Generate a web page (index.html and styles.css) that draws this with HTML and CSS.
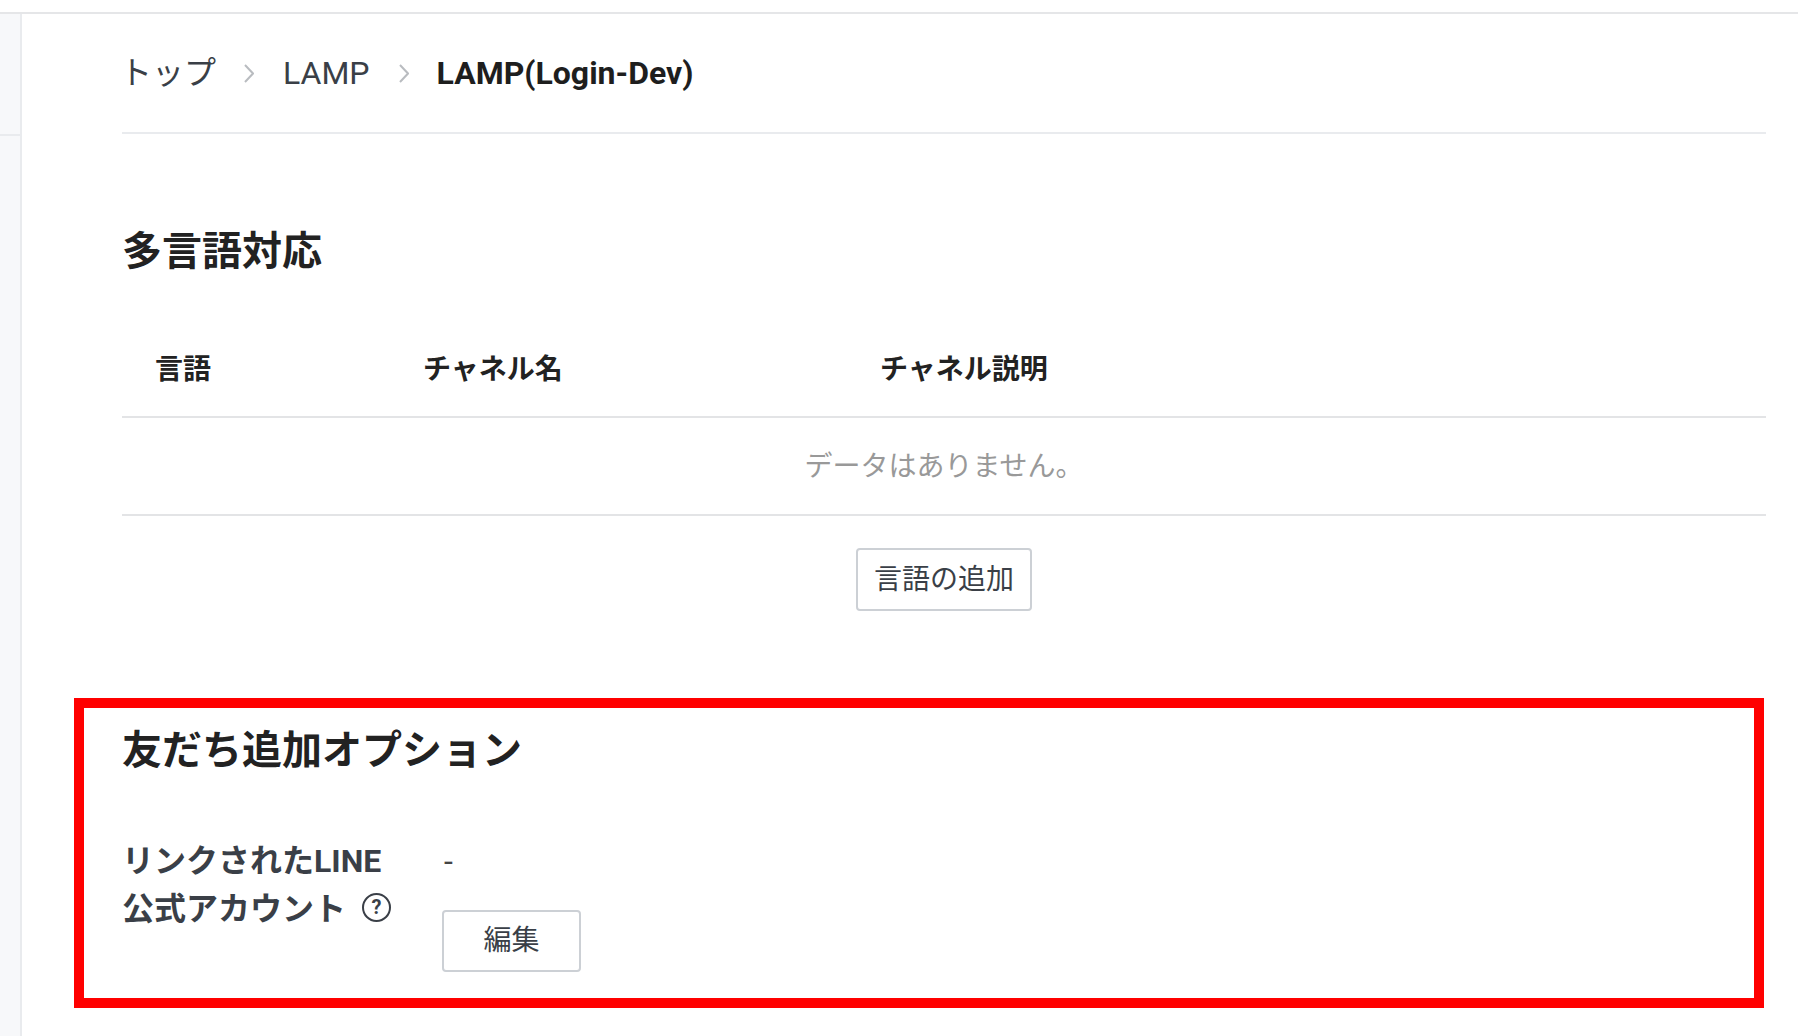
FILE: index.html
```html
<!DOCTYPE html>
<html lang="ja">
<head>
  <meta charset="UTF-8">
  <meta name="viewport" content="width=device-width, initial-scale=1.0">
  <title>LAMP(Login-Dev)</title>
  <link rel="stylesheet" href="styles.css">
</head>
<body>
  <div class="topbar"></div>
  <div class="layout">
    <aside class="sidebar">
      <div class="sidebar-head"></div>
    </aside>
    <main class="content">
      <nav class="breadcrumb">
        <span class="crumb-top">トップ</span>
        <svg class="crumb-arrow" viewBox="0 0 10 19"><path d="M1 1l8 8.5-8 8.5"/></svg>
        <span class="crumb-mid">LAMP</span>
        <svg class="crumb-arrow" viewBox="0 0 10 19"><path d="M1 1l8 8.5-8 8.5"/></svg>
        <strong>LAMP(Login-Dev)</strong>
      </nav>

      <h2 class="section-title lang-title">多言語対応</h2>
      <table class="lang-table">
        <thead>
          <tr>
            <th class="col-lang">言語</th>
            <th class="col-name">チャネル名</th>
            <th>チャネル説明</th>
          </tr>
        </thead>
        <tbody>
          <tr>
            <td colspan="3">データはありません。</td>
          </tr>
        </tbody>
      </table>
      <div class="table-actions">
        <button class="btn" type="button">言語の追加</button>
      </div>

      <h2 class="section-title friend-title">友だち追加オプション</h2>
      <div class="field">
        <div class="field-label">リンクされたLINE<br>公式アカウント<span class="help">?</span></div>
        <div class="field-value">
          <div class="value-text">-</div>
          <button class="btn btn-edit" type="button">編集</button>
        </div>
      </div>
    </main>
  </div>
  <div class="highlight"></div>
</body>
</html>
```

FILE: styles.css
```css
* {
  margin: 0;
  padding: 0;
  box-sizing: border-box;
}
body {
  position: relative;
  display: flex;
  flex-direction: column;
  height: 100vh;
  overflow: hidden;
  background-color: #fff;
  color: #222;
  font-family: Roboto, "Noto Sans CJK JP", sans-serif;
}
.topbar {
  height: 14px;
  border-bottom: 2px solid #e5e6e8;
}
.layout {
  display: flex;
  flex: 1;
}
.sidebar {
  width: 22px;
  background-color: #f7f8fa;
  border-right: 2px solid #e9ebee;
}
.sidebar-head {
  height: 122px;
  border-bottom: 2px solid #e9ebee;
}
.content {
  flex: 1;
  padding: 0 32px 0 100px;
}
.breadcrumb {
  display: flex;
  align-items: center;
  gap: 28px;
  height: 120px;
  border-bottom: 2px solid #e9ebee;
  font-size: 32px;
  line-height: 44px;
  color: #3a3f47;
}
.crumb-top {
  margin-left: -2px;
}
.crumb-mid {
  margin-left: 1px;
  margin-right: 1px;
}
.breadcrumb strong {
  color: #1e1e1e;
  font-weight: 700;
}
.crumb-arrow {
  width: 10px;
  height: 19px;
  fill: none;
  stroke: #b9bcc0;
  stroke-width: 2;
}
.section-title {
  font-size: 40px;
  line-height: 56px;
  font-weight: 700;
  color: #222;
}
.lang-title {
  margin-top: 90px;
  margin-bottom: 39px;
}
.lang-table {
  width: 100%;
  border-collapse: collapse;
  table-layout: fixed;
  font-size: 28px;
}
.lang-table th {
  height: 98px;
  padding-left: 34px;
  padding-bottom: 2px;
  text-align: left;
  font-weight: 700;
  border-bottom: 2px solid #e3e4e6;
}
.col-lang {
  width: 267px;
  text-indent: -1px;
}
.col-name {
  width: 457px;
}
.lang-table td {
  height: 98px;
  padding-bottom: 4px;
  text-align: center;
  color: #999;
  border-bottom: 2px solid #e3e4e6;
}
.table-actions {
  margin-top: 32px;
  text-align: center;
}
.btn {
  width: 176px;
  height: 63px;
  padding-bottom: 6px;
  background-color: #fff;
  border: 2px solid #ccd0d5;
  border-radius: 4px;
  color: #3a3f47;
  font-family: inherit;
  font-size: 28px;
}
.btn-edit {
  width: 139px;
  height: 62px;
}
.friend-title {
  margin-top: 112px;
  margin-bottom: 58px;
}
.field {
  display: flex;
}
.field-label {
  width: 320px;
  font-size: 32px;
  line-height: 48px;
  font-weight: 700;
  color: #3a3f47;
}
.help {
  display: inline-flex;
  align-items: center;
  justify-content: center;
  width: 29px;
  height: 29px;
  margin-left: 16px;
  border: 2px solid #3a3f47;
  border-radius: 50%;
  font-size: 20px;
  line-height: 1;
  vertical-align: 6px;
}
.value-text {
  padding-left: 2px;
  margin-bottom: 23px;
  font-size: 32px;
  line-height: 48px;
  color: #444;
}
.btn-edit {
  margin-top: 2px;
}
.highlight {
  position: absolute;
  left: 74px;
  top: 698px;
  width: 1690px;
  height: 310px;
  border: 10px solid #f00;
}
```
